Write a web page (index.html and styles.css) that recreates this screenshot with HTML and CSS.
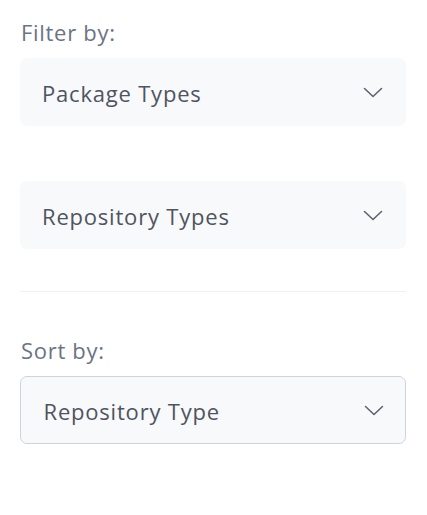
FILE: index.html
```html
<!DOCTYPE html>
<html>
<head>
<meta charset="utf-8">
<link rel="stylesheet" href="styles.css">
</head>
<body>
<div class="panel">
  <div class="label">Filter by:</div>
  <div class="select"><span>Package Types</span><svg class="chev" viewBox="0 0 20 11" width="20" height="11"><path d="M1.5 1.5 L10 9.5 L18.5 1.5" fill="none" stroke="#5a5f6b" stroke-width="1.5" stroke-linecap="round" stroke-linejoin="round"/></svg></div>
  <div class="select second"><span>Repository Types</span><svg class="chev" viewBox="0 0 20 11" width="20" height="11"><path d="M1.5 1.5 L10 9.5 L18.5 1.5" fill="none" stroke="#5a5f6b" stroke-width="1.5" stroke-linecap="round" stroke-linejoin="round"/></svg></div>
  <hr class="divider">
  <div class="label">Sort by:</div>
  <div class="select bordered"><span>Repository Type</span><svg class="chev" viewBox="0 0 20 11" width="20" height="11"><path d="M1.5 1.5 L10 9.5 L18.5 1.5" fill="none" stroke="#5a5f6b" stroke-width="1.5" stroke-linecap="round" stroke-linejoin="round"/></svg></div>
</div>
</body>
</html>
```
FILE: styles.css
```css
html, body { margin: 0; padding: 0; background: #fff; }
body { font-family: "Open Sans", "Noto Sans", sans-serif; }
.panel { padding: 17px 21px 0 20px; display: flex; flex-direction: column; }
.label { font-size: 22px; letter-spacing: 0.7px; color: #6b7385; line-height: 30px; margin-left: 1px; margin-bottom: 11px; }
.select { height: 68px; box-sizing: border-box; background: #f8f9fb; border-radius: 7px; display: flex; align-items: center; justify-content: space-between; padding: 0 23px 0 22px; font-size: 22px; letter-spacing: 0.8px; line-height: 30px; color: #4f5461; }
.select span { padding-top: 1px; }
.select.second { margin-top: 55px; }
.chev { width: 20px; height: 11px; }
.divider { border: 0; border-top: 1px solid #f0f1f5; margin: 42px 0 43px; }
.bordered { border: 1.5px solid #cdd3e3; padding-left: 22.5px; padding-right: 21.5px; }
```
